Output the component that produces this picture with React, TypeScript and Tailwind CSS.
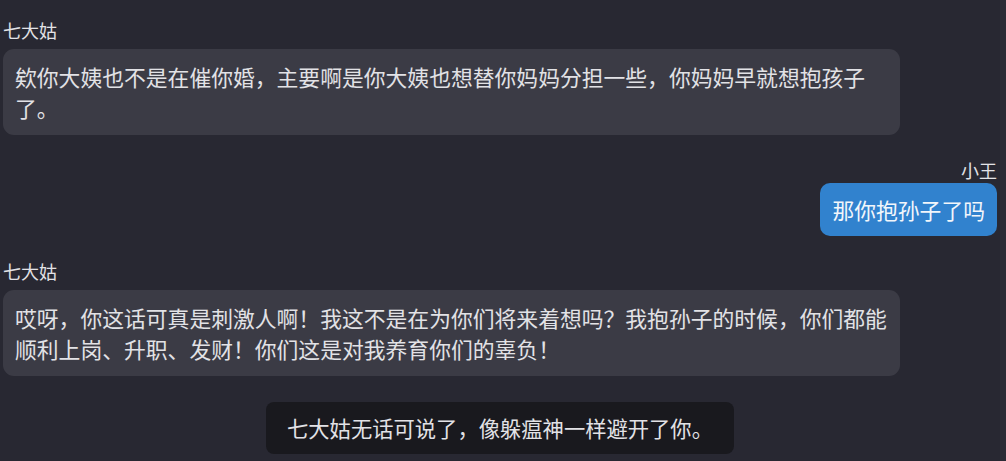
import React from 'react';

type Msg =
  | { kind: 'left'; name: string; text: string }
  | { kind: 'right'; name: string; text: string }
  | { kind: 'narration'; text: string };

const messages: Msg[] = [
  {
    kind: 'left',
    name: '七大姑',
    text: '欸你大姨也不是在催你婚，主要啊是你大姨也想替你妈妈分担一些，你妈妈早就想抱孩子了。',
  },
  { kind: 'right', name: '小王', text: '那你抱孙子了吗' },
  {
    kind: 'left',
    name: '七大姑',
    text: '哎呀，你这话可真是刺激人啊！我这不是在为你们将来着想吗？我抱孙子的时候，你们都能顺利上岗、升职、发财！你们这是对我养育你们的辜负！',
  },
  { kind: 'narration', text: '七大姑无话可说了，像躲瘟神一样避开了你。' },
];

const font = "font-['Microsoft_YaHei','Noto_Sans_CJK_SC',sans-serif]";

export default function App() {
  return (
    <div className={`flex h-[461px] w-full overflow-hidden bg-[#282832] text-[#e2e2e6] ${font}`}>
      <div className="flex min-w-0 flex-1 flex-col pl-[3px] pr-[3px] pt-[18px]">
        {messages.map((m, i) => {
          if (m.kind === 'left') {
            return (
              <div key={i} className="mb-[26px] flex flex-col items-start">
                <div className="mb-[7px] text-[18px] leading-[24px]">{m.name}</div>
                <div className="w-[897px] rounded-[11px] bg-[#3b3b45] pl-[12px] pr-[10px] py-[12px] text-[21.8px] leading-[31px]">
                  {m.text}
                </div>
              </div>
            );
          }
          if (m.kind === 'right') {
            return (
              <div key={i} className="-mt-[3px] mb-[23px] flex flex-col items-end">
                <div className="mb-[1px] text-[18px] leading-[24px]">{m.name}</div>
                <div className="rounded-[10px] bg-[#3182ce] px-[12px] py-[11px] text-[21.8px] leading-[31px] text-[#f2f6fb]">
                  {m.text}
                </div>
              </div>
            );
          }
          return (
            <div key={i} className="flex justify-center">
              <div className="rounded-[8px] bg-[#19191e] px-[21px] py-[10px] text-[21.3px] leading-[32px]">
                {m.text}
              </div>
            </div>
          );
        })}
      </div>
      <div className="w-[6px] shrink-0 bg-[#2b2b35]" />
    </div>
  );
}
